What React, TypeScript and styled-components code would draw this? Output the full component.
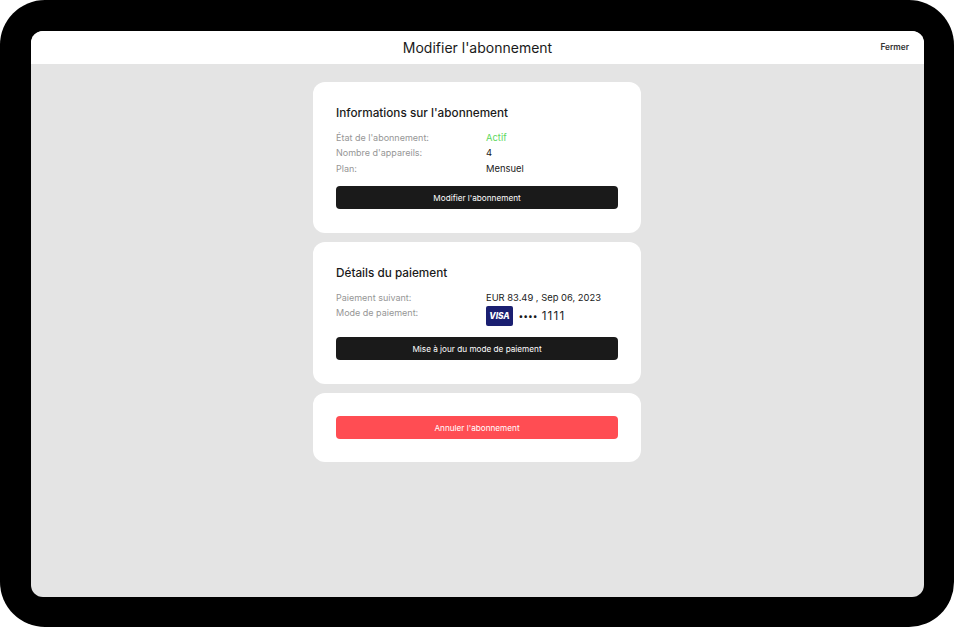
import React from 'react';
import styled, { createGlobalStyle } from 'styled-components';

const GlobalStyle = createGlobalStyle`
  html, body {
    margin: 0;
    padding: 0;
    background: #fff;
  }
  body {
    font-family: Inter, "Liberation Sans", sans-serif;
  }
`;

function App() {
  return (
    <>
      <GlobalStyle />
      <Frame>
        <Screen>
          <Header>
            <HeaderTitle>Modifier l'abonnement</HeaderTitle>
            <CloseLink>Fermer</CloseLink>
          </Header>
          <Content>
            <Card>
              <CardTitle>Informations sur l'abonnement</CardTitle>
              <Rows>
                <Row>
                  <Label>État de l'abonnement:</Label>
                  <Value $active>Actif</Value>
                </Row>
                <Row>
                  <Label>Nombre d'appareils:</Label>
                  <Value>4</Value>
                </Row>
                <Row>
                  <Label>Plan:</Label>
                  <Value>Mensuel</Value>
                </Row>
              </Rows>
              <ActionButton>Modifier l'abonnement</ActionButton>
            </Card>
            <Card>
              <CardTitle>Détails du paiement</CardTitle>
              <Rows>
                <Row>
                  <Label>Paiement suivant:</Label>
                  <Value>EUR 83.49 , Sep 06, 2023</Value>
                </Row>
                <Row>
                  <Label>Mode de paiement:</Label>
                  <CardValue>
                    <VisaBadge>VISA</VisaBadge>
                    <CardDots>••••</CardDots>
                    <CardDigits>1111</CardDigits>
                  </CardValue>
                </Row>
              </Rows>
              <ActionButton>Mise à jour du mode de paiement</ActionButton>
            </Card>
            <Card>
              <ActionButton $danger $flush>
                Annuler l'abonnement
              </ActionButton>
            </Card>
          </Content>
        </Screen>
      </Frame>
    </>
  );
}

export default App;

const Frame = styled.div`
  width: 954px;
  height: 627px;
  box-sizing: border-box;
  padding: 31px 30px 30px 31px;
  background: #000;
  border-radius: 45px;
`;
const Screen = styled.div`
  height: 100%;
  display: flex;
  flex-direction: column;
  background: #e4e4e4;
  border-radius: 12px;
  overflow: hidden;
`;
const Header = styled.div`
  position: relative;
  height: 33px;
  flex-shrink: 0;
  display: flex;
  align-items: center;
  justify-content: center;
  background: #fff;
`;
const HeaderTitle = styled.div`
  font-size: 14px;
  font-weight: 400;
  color: #1a1a1a;
`;
const CloseLink = styled.div`
  position: absolute;
  right: 15px;
  top: 11px;
  font-size: 8.3px;
  line-height: 10px;
  font-weight: 600;
  color: #333;
`;
const Content = styled.div`
  display: flex;
  flex-direction: column;
  align-items: center;
  gap: 9px;
  padding: 18px 1px 0 0;
`;
const Card = styled.div`
  width: 328px;
  box-sizing: border-box;
  padding: 23px;
  background: #fff;
  border-radius: 12px;
`;
const CardTitle = styled.div`
  font-size: 11.75px;
  line-height: 16px;
  font-weight: 500;
  color: #1a1a1a;
  margin-bottom: 10.5px;
`;
const Rows = styled.div`
  display: flex;
  flex-direction: column;
  gap: 3px;
`;
const Row = styled.div`
  display: flex;
  font-size: 9px;
  line-height: 12.5px;
`;
const Label = styled.div`
  width: 150px;
  color: #969696;
`;
const Value = styled.div<{ $active?: boolean }>`
  font-size: 9.4px;
  color: ${(p) => (p.$active ? '#5ed85e' : '#1a1a1a')};
`;
const CardValue = styled.div`
  display: flex;
  align-items: center;
  color: #1a1a1a;
`;
const VisaBadge = styled.div`
  width: 27px;
  height: 20px;
  display: flex;
  align-items: center;
  justify-content: center;
  margin: -1px 6px 0 0;
  border-radius: 2px;
  background: #1a1f71;
  color: #fff;
  font-size: 8.3px;
  font-weight: 800;
  font-style: italic;
`;
const CardDots = styled.span`
  font-size: 8.5px;
  margin: 0 4px 0 -0.5px;
`;
const CardDigits = styled.span`
  font-size: 11.5px;
  letter-spacing: 1.3px;
`;
const ActionButton = styled.div<{ $danger?: boolean; $flush?: boolean }>`
  height: 23px;
  margin: ${(p) => (p.$flush ? '0' : '11px 0 1px')};
  display: flex;
  align-items: center;
  justify-content: center;
  border-radius: 4px;
  background: ${(p) => (p.$danger ? '#ff4d53' : '#1a1a1a')};
  color: #fff;
  font-size: 8.2px;
`;
